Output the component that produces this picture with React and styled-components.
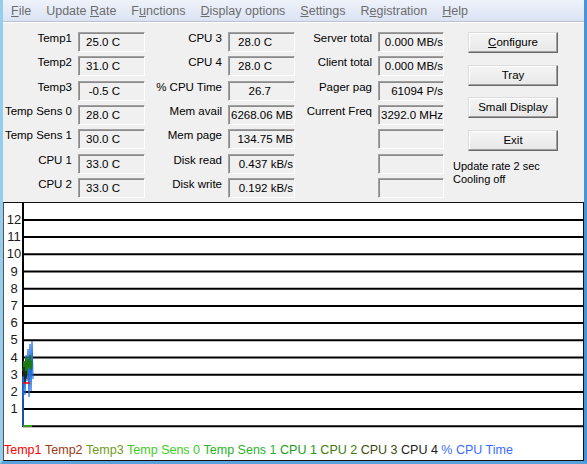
import React from "react";
import styled, { createGlobalStyle } from "styled-components";

const GlobalStyle = createGlobalStyle`
  html, body {
    margin: 0;
    padding: 0;
    overflow: hidden;
    background: #ffffff;
  }
`;

const menus = [
  ["F", "ile"],
  ["Update ", "R", "ate"],
  ["F", "u", "nctions"],
  ["D", "isplay options"],
  ["S", "ettings"],
  ["R", "e", "gistration"],
  ["H", "elp"],
];

// [label, value, padding-right]
const col1 = [
  ["Temp1", "25.0 C", 24],
  ["Temp2", "31.0 C", 24],
  ["Temp3", "-0.5 C", 24],
  ["Temp Sens 0", "28.0 C", 24],
  ["Temp Sens 1", "30.0 C", 24],
  ["CPU 1", "33.0 C", 24],
  ["CPU 2", "33.0 C", 24],
];

const col2 = [
  ["CPU 3", "28.0 C", 22],
  ["CPU 4", "28.0 C", 22],
  ["% CPU Time", "26.7", 23],
  ["Mem avail", "6268.06 MB", 1],
  ["Mem page", "134.75 MB", 1],
  ["Disk read", "0.437 kB/s", 1],
  ["Disk write", "0.192 kB/s", 1],
];

const col3 = [
  ["Server total", "0.000 MB/s", 0],
  ["Client total", "0.000 MB/s", 0],
  ["Pager pag", "61094 P/s", 0],
  ["Current Freq", "3292.0 MHz", 0],
  ["", "", 0],
  ["", "", 0],
  ["", "", 0],
];

const legend = [
  ["Temp1", "#ff0000"],
  ["Temp2", "#9c3a12"],
  ["Temp3", "#6f9a1c"],
  ["Temp Sens 0", "#3ccc1e"],
  ["Temp Sens 1", "#28b428"],
  ["CPU 1", "#1c9a14"],
  ["CPU 2", "#3d7a08"],
  ["CPU 3", "#404a10"],
  ["CPU 4", "#202020"],
  ["% CPU Time", "#3a6cff"],
];

const App = () => {
  return (
    <>
      <GlobalStyle />
      <Window>
        <MenuBar>
          {menus.map((parts, i) => (
            <MenuItem key={i}>
              {parts.length === 2 ? (
                <>
                  <u>{parts[0]}</u>
                  {parts[1]}
                </>
              ) : (
                <>
                  {parts[0]}
                  <u>{parts[1]}</u>
                  {parts[2]}
                </>
              )}
            </MenuItem>
          ))}
        </MenuBar>

        <Panel>
          <FieldColumn $labelWidth={69}>
            {col1.map(([l, v, p]) => (
              <React.Fragment key={l}>
                <Label>{l}</Label>
                <ValueBox $pad={p}>{v}</ValueBox>
              </React.Fragment>
            ))}
          </FieldColumn>
          <FieldColumn $labelWidth={77}>
            {col2.map(([l, v, p]) => (
              <React.Fragment key={l}>
                <Label>{l}</Label>
                <ValueBox $pad={p}>{v}</ValueBox>
              </React.Fragment>
            ))}
          </FieldColumn>
          <FieldColumn $labelWidth={77} $boxWidth={66}>
            {col3.map(([l, v, p], i) => (
              <React.Fragment key={i}>
                <Label>{l}</Label>
                <ValueBox $pad={p}>{v}</ValueBox>
              </React.Fragment>
            ))}
          </FieldColumn>
          <ButtonColumn>
            <Button>
              <u>C</u>onfigure
            </Button>
            <Button>Tray</Button>
            <Button>Small Display</Button>
            <Button>Exit</Button>
            <Status>
              Update rate 2 sec
              <br />
              Cooling off
            </Status>
          </ButtonColumn>
        </Panel>

        <Graph>
          <Chart />
          <Legend>
            {legend.map(([t, c]) => (
              <LegendItem key={t} $color={c}>
                {t}
              </LegendItem>
            ))}
          </Legend>
        </Graph>
      </Window>
    </>
  );
};

// chart is drawn in page coordinates, shifted into the graph box
const lineY = (v) => 427.3 - 17.2 * v;

const Chart = () => {
  const values = Array.from({ length: 13 }, (_, i) => i);
  return (
    <svg width="579" height="239" style={{ display: "block" }}>
      <g transform="translate(-4,-204)">
        {values.map((v) => (
          <line
            key={v}
            x1="23"
            x2="583"
            y1={lineY(v)}
            y2={lineY(v)}
            stroke="#000"
            strokeWidth="2"
          />
        ))}
        <line x1="23" x2="23" y1="204" y2="428" stroke="#000" strokeWidth="2" />
        {values.slice(1).map((v) => (
          <text
            key={v}
            x="14"
            y={lineY(v) + 4}
            textAnchor="middle"
            fontSize="13"
            fontFamily="'Liberation Sans', Arial, sans-serif"
            fill="#1a1a1a"
          >
            {v}
          </text>
        ))}
        <line x1="23" x2="32" y1="427" y2="427" stroke="#3a9a1a" strokeWidth="2" />
        <line x1="23" x2="23" y1="377" y2="427" stroke="#1e6fe0" strokeWidth="1.5" />
        <polyline
          points="23,400 24,362 25,396 26,356 27,382 28,350 29,398 30,345 31,392 32,342 33,380"
          fill="none"
          stroke="#1e6fe0"
          strokeWidth="1.2"
        />
        <polyline
          points="23,372 24,362 25,380 26,358 27,376 28,360 29,369 30,356 31,371 32,362"
          fill="none"
          stroke="#1c7a14"
          strokeWidth="1.5"
        />
        <polyline
          points="23,378 24,368 25,384 26,372 27,380"
          fill="none"
          stroke="#202020"
          strokeWidth="1"
        />
        <line x1="23" x2="30" y1="384" y2="384" stroke="#ff0000" strokeWidth="1.5" />
      </g>
    </svg>
  );
};

const Window = styled.div`
  width: 587px;
  height: 464px;
  box-sizing: border-box;
  display: flex;
  flex-direction: column;
  background: #f0f0f0;
  border-left: 3px solid #94cdee;
  border-right: 3px solid #4794da;
  border-bottom: 3px solid #5aa2de;
  font-family: "Liberation Sans", Arial, sans-serif;
  color: #000;
`;

const MenuBar = styled.div`
  height: 21px;
  flex: none;
  display: flex;
  align-items: center;
  gap: 15px;
  padding-left: 8px;
  background: linear-gradient(#eef2fa, #dbe3f3);
  border-bottom: 1px solid #b8c2d4;
  font-size: 12.5px;
  color: #6d6d6d;
`;

const MenuItem = styled.span`
  white-space: nowrap;
  u {
    text-decoration-thickness: 1px;
  }
`;

const Panel = styled.div`
  height: 180px;
  flex: none;
  box-sizing: border-box;
  display: flex;
  align-items: flex-start;
  padding-top: 9px;
  border-top: 1px solid #ffffff;
`;

const FieldColumn = styled.div`
  display: grid;
  grid-template-columns: ${(p) => p.$labelWidth}px ${(p) => p.$boxWidth || 67}px;
  grid-auto-rows: 20px;
  column-gap: 6px;
  row-gap: 4.33px;
`;

const Label = styled.div`
  text-align: right;
  font-size: 11.5px;
  line-height: 13px;
  white-space: nowrap;
`;

const ValueBox = styled.div`
  box-sizing: border-box;
  height: 20px;
  border: 1px solid;
  border-color: #a0a0a0 #ffffff #ffffff #a0a0a0;
  box-shadow: inset 1px 1px 0 #8a8a8a;
  background: #f0f0f0;
  font-size: 11.5px;
  line-height: 19px;
  text-align: right;
  padding-right: ${(p) => p.$pad}px;
  white-space: nowrap;
  overflow: hidden;
`;

const ButtonColumn = styled.div`
  display: flex;
  flex-direction: column;
  margin-left: 9px;
`;

const Button = styled.div`
  box-sizing: border-box;
  width: 90px;
  height: 21px;
  margin-left: 15px;
  margin-bottom: 11.5px;
  border: 1px solid;
  border-color: #dcdcdc #696969 #696969 #dcdcdc;
  box-shadow: inset -1px -1px 0 #a0a0a0, inset 1px 1px 0 #ffffff;
  background: linear-gradient(#f4f4f4, #e8e8e8);
  font-size: 11.5px;
  line-height: 19px;
  text-align: center;
`;

const Status = styled.div`
  margin-top: -2px;
  font-size: 11px;
  line-height: 13px;
  white-space: nowrap;
`;

const Graph = styled.div`
  flex: 1;
  box-sizing: border-box;
  background: #ffffff;
  border: 1px solid #111;
  border-left-color: #555;
  display: flex;
  flex-direction: column;
`;

const Legend = styled.div`
  font-size: 12.5px;
  line-height: 16px;
  white-space: nowrap;
  display: flex;
  gap: 3.5px;
`;

const LegendItem = styled.span`
  color: ${(p) => p.$color};
`;

export default App;
